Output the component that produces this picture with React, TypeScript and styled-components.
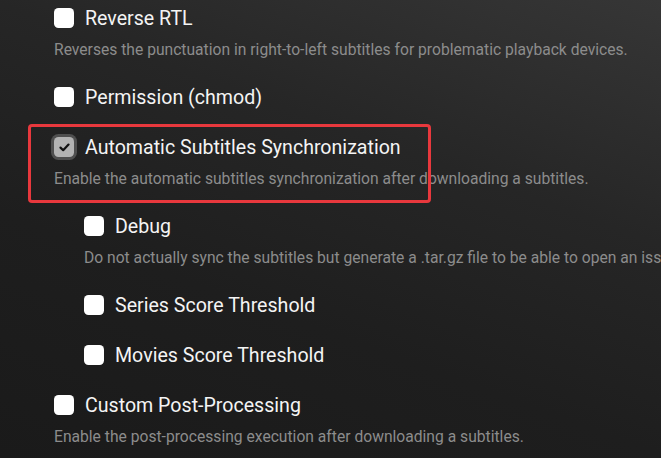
import React from "react";
import styled, { createGlobalStyle } from "styled-components";

const Global = createGlobalStyle`
  html, body { margin: 0; padding: 0; }
  body {
    width: 661px;
    height: 458px;
    overflow: hidden;
    font-family: Roboto, "Noto Sans", sans-serif;
    background: linear-gradient(200deg, #363636 0%, #262626 35%, #1e1e1e 65%, #1a1a1a 100%);
  }
`;

const Page = styled.div`
  position: relative;
  width: 661px;
  height: 458px;
  box-sizing: border-box;
  overflow: hidden;
  padding: 3px 0 0 54px;
  display: flex;
  flex-direction: column;
  gap: 20px;
`;

const Item = styled.div`
  display: flex;
  flex-direction: column;
`;

const Nested = styled.div`
  display: flex;
  flex-direction: column;
  gap: 20px;
  padding-left: 30px;
`;

const TitleRow = styled.label`
  display: flex;
  align-items: center;
  gap: 11px;
  height: 30px;
  color: #f4f4f4;
  font-size: 19.6px;
  white-space: nowrap;
`;

const Box = styled.span<{ $checked?: boolean }>`
  flex: none;
  width: 20px;
  height: 20px;
  box-sizing: border-box;
  border-radius: 4.5px;
  background: ${(p) => (p.$checked ? "#b3b3b3" : "#ffffff")};
  display: flex;
  align-items: center;
  justify-content: center;
  box-shadow: ${(p) => (p.$checked ? "0 0 0 3px #4f4f4f" : "none")};
`;

const Desc = styled.div`
  margin: 6px 0 1px;
  line-height: 22px;
  font-size: 15.65px;
  color: #8c8c8c;
  white-space: nowrap;
`;

const Highlight = styled.div`
  position: absolute;
  left: 28px;
  top: 124px;
  width: 403px;
  height: 79px;
  box-sizing: border-box;
  border: 3px solid #e8383d;
  border-radius: 4px;
  pointer-events: none;
`;

const Check = () => (
  <svg width="11" height="9" viewBox="0 0 11 9">
    <path d="M1.5 4.6 L4.2 7.2 L9.5 1.6" fill="none" stroke="#111" strokeWidth="2.2" strokeLinecap="round" strokeLinejoin="round" />
  </svg>
);

const Option = ({ title, desc, checked }: { title: string; desc?: string; checked?: boolean }) => (
  <Item>
    <TitleRow>
      <Box $checked={checked}>{checked && <Check />}</Box>
      {title}
    </TitleRow>
    {desc && <Desc>{desc}</Desc>}
  </Item>
);

export default function App() {
  return (
    <>
      <Global />
      <Page>
        <Option title="Reverse RTL" desc="Reverses the punctuation in right-to-left subtitles for problematic playback devices." />
        <Option title="Permission (chmod)" />
        <Option
          title="Automatic Subtitles Synchronization"
          desc="Enable the automatic subtitles synchronization after downloading a subtitles."
          checked
        />
        <Nested>
          <Option
            title="Debug"
            desc="Do not actually sync the subtitles but generate a .tar.gz file to be able to open an issue for ffsubsync."
          />
          <Option title="Series Score Threshold" />
          <Option title="Movies Score Threshold" />
        </Nested>
        <Option title="Custom Post-Processing" desc="Enable the post-processing execution after downloading a subtitles." />
        <Highlight />
      </Page>
    </>
  );
}
